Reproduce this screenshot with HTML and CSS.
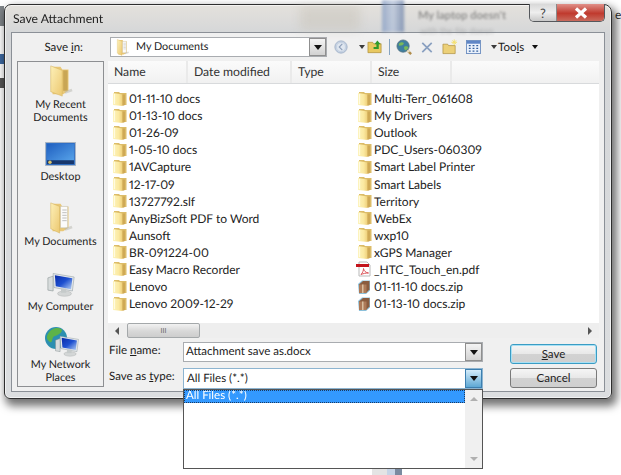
FILE: index.html
```html
<!DOCTYPE html>
<html lang="en">
<head>
<meta charset="utf-8">
<title>Save Attachment</title>
<link rel="stylesheet" href="styles.css">
</head>
<body>
<svg class="defs" width="0" height="0" aria-hidden="true">
  <defs>
    <linearGradient id="fold" x1="0" y1="0" x2="1" y2="0"><stop offset="0" stop-color="#fdf3bc"/><stop offset=".6" stop-color="#fbe9a0"/><stop offset="1" stop-color="#eecf7a"/></linearGradient>
    <linearGradient id="foldBig" x1="0" y1="0" x2="1" y2="1"><stop offset="0" stop-color="#fdf0b8"/><stop offset="1" stop-color="#ecc870"/></linearGradient>
    <linearGradient id="screen" x1="0" y1="0" x2="1" y2="1"><stop offset="0" stop-color="#0a2ba8"/><stop offset=".5" stop-color="#1e50d0"/><stop offset="1" stop-color="#b8d2f4"/></linearGradient>
    <linearGradient id="desk" x1="0" y1="0" x2="1" y2="1"><stop offset="0" stop-color="#1f5fc0"/><stop offset="1" stop-color="#58a4ea"/></linearGradient>
    <symbol id="folder" viewBox="0 0 14 14">
      <path d="M1 0h5l1 1h6.500v12H1z" fill="#dcbc68"/>
      <path d="M0 1l9.500 1.500V14L0 13z" fill="url(#fold)"/>
      <path d="M1.500 2v10" stroke="#fffbe0" stroke-width="1.200"/>
      <path d="M9.500 2.500h2.500V13L9.500 14z" fill="#cfa955"/>
    </symbol>
    <symbol id="pdf" viewBox="0 0 16 16">
      <path d="M3 1h8l3 3v11H3z" fill="#fff" stroke="#b9b9b9"/>
      <rect x="0" y="3" width="13" height="3" fill="#c4141c"/>
      <path d="M5 13.500c2-2 2.500-4.500 2.500-6 .5 2.500 2 4 5 4.500-3 0-5 .5-7.500 1.500z" fill="none" stroke="#d8444a" stroke-width=".9"/>
    </symbol>
    <symbol id="zip" viewBox="0 0 14 14">
      <path d="M0 4l4-3.500h8v10L8 14H1z" fill="#8cc0da"/>
      <path d="M1 4.500 5 1h6.500v8.500L8 13H1z" fill="#8a5c3e"/>
      <path d="M1 4.500h7.500V13H1z" fill="#ad7a58"/>
      <path d="M4 4.500h1.500V13H4z" fill="#d9bfa0"/>
    </symbol>
    <symbol id="bigfolder" viewBox="0 0 30 36">
      <path d="M6 2h9l2 3h7v24l-6 4H6z" fill="#e9c878"/>
      <path d="M18 6h5v23h-5z" fill="#c9a655"/>
      <path d="M4 1l13 5v29L4 30z" fill="url(#foldBig)" stroke="#d6b45c" stroke-width=".6"/>
      <path d="M20 31l8-3" stroke="#b8b8b0" stroke-width="3" opacity=".5"/>
    </symbol>
    <symbol id="docfolder" viewBox="0 0 30 36">
      <path d="M6 2h9l2 3h7v24l-6 4H6z" fill="#e9c878"/>
      <path d="M15 5h8v24h-8z" fill="#fbfbfb" stroke="#b8b8b0" stroke-width=".5"/>
      <path d="M17 9h5M17 12h5M17 15h5M17 18h5M17 21h5" stroke="#a8a8a8" stroke-width=".8"/>
      <path d="M4 1l10 4v30L4 30z" fill="url(#foldBig)" stroke="#d6b45c" stroke-width=".6"/>
      <path d="M20 31l8-3" stroke="#b8b8b0" stroke-width="3" opacity=".5"/>
    </symbol>
    <symbol id="monitor" viewBox="0 0 34 32">
      <path d="M2 9l6-2v17l-6-1z" fill="#d8dcdc" stroke="#7f8a8c" stroke-width=".6"/>
      <path d="M8 4l24 4-2 16L9 20z" fill="#e4e8ec" stroke="#8b979c" stroke-width=".6"/>
      <path d="M10 6l20 3.500-1.500 12.500L11 18.500z" fill="url(#screen)"/>
      <ellipse cx="21" cy="27" rx="8" ry="3" fill="#d3d6d6" stroke="#a9adad" stroke-width=".5"/>
      <path d="M17 21h6v5h-6z" fill="#c5caca"/>
    </symbol>
  </defs>
</svg>

<div class="backdrop">
  <span class="bg-title">My laptop doesn't</span>
  <span class="bg-sub">with the file doesn</span>
  <span class="bg-tail">e</span>
  <span class="bg-band"></span>
  <span class="bg-smudge"></span>
  <span class="bg-left"></span>
  <span class="bg-foot"></span>
</div>

<main class="dialog">
  <header class="titlebar">
    <span class="title">Save Attachment</span>
    <div class="caption">
      <span class="cap-help">?</span>
      <span class="cap-close">
        <svg width="18" height="14" viewBox="0 0 18 14"><path d="M4 2.500l10 9M14 2.500l-10 9" stroke="#fff" stroke-width="3.200"/></svg>
      </span>
    </div>
  </header>

  <section class="frame">
    <div class="toolbar">
      <label class="tool-label">Save <u>i</u>n:</label>
      <div class="combo location">
        <svg class="loc-icon" width="15" height="17"><use href="#docfolder"/></svg>
        <span class="combo-text">My Documents</span>
        <span class="drop"><i></i></span>
      </div>
      <div class="tools">
        <svg class="t-back" width="14" height="14" viewBox="0 0 16 16"><circle cx="8" cy="8" r="7" fill="#c6d2e2" stroke="#9fb0c8"/><circle cx="8" cy="8" r="4.500" fill="#e0e7f0"/><path d="M9.500 4.500 6 8l3.500 3.500" fill="none" stroke="#8ea0ba" stroke-width="1.300"/></svg>
        <i class="mini-arrow"></i>
        <svg class="t-up" width="16" height="16" viewBox="0 0 17 16"><path d="M1 3h5l1 1.500h8V14H1z" fill="#e8c860" stroke="#a98a34" stroke-width=".7"/><path d="M11 1l3.500 4H12.500v5H7V8h3V5H8z" fill="#2f9a2a"/></svg>
        <span class="t-sep"></span>
        <svg class="t-web" width="17" height="17" viewBox="0 0 18 18"><circle cx="7.500" cy="7.500" r="6.500" fill="#3f7e9e" stroke="#54707e" stroke-width=".8"/><path d="M3 5c2-2 4-2 5-1s-1 3-3 3-2 1-2-2zM9 8c2-1 4 0 4 1s-2 3-3 3-2-3-1-4z" fill="#7ab95a"/><path d="M12 12l4 4" stroke="#b08c4a" stroke-width="2.500"/><circle cx="13" cy="13" r="1.400" fill="#e4ddc4"/></svg>
        <svg class="t-del" width="12" height="13" viewBox="0 0 14 14"><path d="M1.500 1.500l11 11M12.500 1.500l-11 11" stroke="#8aa0c0" stroke-width="2"/></svg>
        <svg class="t-new" width="16" height="16" viewBox="0 0 17 16"><path d="M1 5h5l1 1.500h7V15H1z" fill="#ecd078" stroke="#a98a34" stroke-width=".7"/><path d="M13 0v6M10 3h6M11 1l4 4M15 1l-4 4" stroke="#f4e06a" stroke-width="1"/></svg>
        <svg class="t-view" width="15" height="14" viewBox="0 0 16 15"><rect x=".5" y=".5" width="15" height="14" fill="#eaf1fb" stroke="#6f8fc0"/><rect x="1" y="1" width="14" height="3" fill="#5f86c6"/><path d="M3 6h2M7 6h2M11 6h2M3 9h2M7 9h2M11 9h2M3 12h2M7 12h2M11 12h2" stroke="#35609f" stroke-width="1.400"/></svg>
        <div class="t-tools"><i class="mini-arrow"></i><span>Too<u>l</u>s</span><i class="mini-arrow dark"></i></div>
      </div>
    </div>

    <div class="middle">
      <nav class="places">
        <a class="place recent"><svg width="27" height="32"><use href="#bigfolder"/></svg><span>My Recent Documents</span></a>
        <a class="place desktop">
          <svg width="31" height="24" viewBox="0 0 32 25"><rect x=".5" y=".5" width="31" height="24" fill="#2f6fc6" stroke="#a9b4c2"/><rect x="2" y="2" width="28" height="18" fill="url(#desk)"/><rect x="2" y="19" width="28" height="4" fill="#17366c"/><circle cx="5" cy="21" r="1.800" fill="#d9c36a"/></svg>
          <span>Desktop</span>
        </a>
        <a class="place docs"><svg width="27" height="32"><use href="#docfolder"/></svg><span>My Documents</span></a>
        <a class="place computer"><svg width="30" height="28"><use href="#monitor"/></svg><span>My Computer</span></a>
        <a class="place network">
          <span class="net-icon">
            <svg width="34" height="32" viewBox="0 0 34 32"><circle cx="12" cy="13" r="11" fill="#2c8fb0"/><path d="M4 9c3-6 10-7 13-5s-2 6-6 7-2 8-5 6-4-5-2-8z" fill="#5db348"/></svg>
            <svg class="net-mon" width="26" height="25"><use href="#monitor"/></svg>
          </span>
          <span>My Network Places</span>
        </a>
      </nav>

      <div class="browser">
        <div class="list-head">
          <span class="col c-name">Name</span>
          <span class="col c-date">Date modified</span>
          <span class="col c-type">Type</span>
          <span class="col c-size">Size</span>
          <span class="col c-rest"></span>
        </div>
        <div class="files">
          <ul class="file-col">
            <li><svg><use href="#folder"/></svg>01-11-10 docs</li>
            <li><svg><use href="#folder"/></svg>01-13-10 docs</li>
            <li><svg><use href="#folder"/></svg>01-26-09</li>
            <li><svg><use href="#folder"/></svg>1-05-10 docs</li>
            <li><svg><use href="#folder"/></svg>1AVCapture</li>
            <li><svg><use href="#folder"/></svg>12-17-09</li>
            <li><svg><use href="#folder"/></svg>13727792.slf</li>
            <li><svg><use href="#folder"/></svg>AnyBizSoft PDF to Word</li>
            <li><svg><use href="#folder"/></svg>Aunsoft</li>
            <li><svg><use href="#folder"/></svg>BR-091224-00</li>
            <li><svg><use href="#folder"/></svg>Easy Macro Recorder</li>
            <li><svg><use href="#folder"/></svg>Lenovo</li>
            <li><svg><use href="#folder"/></svg>Lenovo 2009-12-29</li>
          </ul>
          <ul class="file-col">
            <li><svg><use href="#folder"/></svg>Multi-Terr_061608</li>
            <li><svg><use href="#folder"/></svg>My Drivers</li>
            <li><svg><use href="#folder"/></svg>Outlook</li>
            <li><svg><use href="#folder"/></svg>PDC_Users-060309</li>
            <li><svg><use href="#folder"/></svg>Smart Label Printer</li>
            <li><svg><use href="#folder"/></svg>Smart Labels</li>
            <li><svg><use href="#folder"/></svg>Territory</li>
            <li><svg><use href="#folder"/></svg>WebEx</li>
            <li><svg><use href="#folder"/></svg>wxp10</li>
            <li><svg><use href="#folder"/></svg>xGPS Manager</li>
            <li><svg class="wide"><use href="#pdf"/></svg>_HTC_Touch_en.pdf</li>
            <li><svg><use href="#zip"/></svg>01-11-10 docs.zip</li>
            <li><svg><use href="#zip"/></svg>01-13-10 docs.zip</li>
          </ul>
        </div>
        <div class="hscroll">
          <i class="arrow-l"></i>
          <span class="thumb">III</span>
          <i class="arrow-r"></i>
        </div>
        <div class="form">
          <div class="fields">
            <div class="field">
              <label>File <u>n</u>ame:</label>
              <div class="combo"><span class="combo-text">Attachment save as.docx</span><span class="drop"><i></i></span></div>
            </div>
            <div class="field">
              <label>Save as <u>t</u>ype:</label>
              <div class="combo active"><span class="combo-text type">All Files (*.*)</span><span class="drop"><i></i></span></div>
            </div>
          </div>
          <div class="buttons">
            <button class="btn default"><u>S</u>ave</button>
            <button class="btn">Cancel</button>
          </div>
        </div>
      </div>
    </div>
  </section>
</main>

<div class="dropdown">
  <div class="options"><div class="option">All Files (*.*)</div></div>
  <div class="vscroll"><i class="up"></i><i class="down"></i></div>
</div>
</body>
</html>
```
FILE: styles.css
```css
* { box-sizing: border-box; }
html, body { margin: 0; padding: 0; }
body {
  width: 621px; height: 475px; overflow: hidden; position: relative;
  background: #fff; color: #1c1c1c;
  font: 11.500px/15px Lato, "Open Sans", sans-serif;
  font-variant-numeric: proportional-nums;
  text-rendering: geometricPrecision;
}
.defs { position: absolute; }
u { text-decoration-thickness: 1px; text-underline-offset: 1px; }
i { display: block; }

/* what lies behind the glass dialog */
.backdrop { position: absolute; inset: 0; overflow: hidden; }
.backdrop span { position: absolute; }
.bg-title { left: 418px; top: 8px; font-weight: 700; font-size: 11px; color: #555; filter: blur(1.2px); z-index: 3; opacity: .55; }
.bg-sub { left: 420px; top: 23px; font-size: 9px; color: #888; filter: blur(1.4px); z-index: 3; opacity: .5; }
.bg-tail { left: 615px; top: 7px; font-size: 12px; color: #333; }
.bg-band { left: 382px; top: 0; width: 22px; height: 32px; background: linear-gradient(90deg, #6f8cbc, #aebfdc 50%, #526c9c); filter: blur(1.5px); z-index: 3; opacity: .6; }
.bg-smudge { left: 300px; top: 6px; width: 60px; height: 24px; background: #c9c4ba; filter: blur(5px); z-index: 3; opacity: .5; }
.bg-left { left: 0; top: 6px; width: 4px; height: 120px; background: linear-gradient(#7f8488 0 20px, #fff 20px 48px, #3d68a0 48px 58px, #fff 58px 72px, #555 72px 82px, #fff 82px); }
.bg-foot { left: 372px; top: 468px; width: 30px; height: 7px; background: linear-gradient(90deg, #e4e4e4 0 50%, #c6d4e6 50% 75%, #7a8aa0 75%); }

.dialog, .dropdown { filter: blur(.3px); }
.dialog {
  position: absolute; left: 4px; top: 4px; width: 608px; height: 395px;
  display: flex; flex-direction: column;
  padding: 0 6px 6px 6px;
  background: linear-gradient(180deg, #e4e1dc 0, #d4d6d8 30px, #dcdee0 100%);
  border: 1px solid #2e2e2e; border-radius: 7px 8px 6px 6px;
  box-shadow: 3px 5px 9px 2px rgba(0,0,0,.55), inset 0 0 0 1px rgba(255,255,255,.6);
}
.titlebar { height: 27px; flex: none; display: flex; justify-content: space-between; position: relative; z-index: 4; }
.title { padding: 6px 0 0 2px; font-size: 12.200px; color: #222; }
.caption { display: flex; height: 18px; margin-top: -1px; border: 1px solid #55585c; border-top: 0; border-radius: 0 0 5px 5px; overflow: hidden; }
.cap-help { width: 27px; text-align: center; font-size: 13px; line-height: 18px; color: #444; background: linear-gradient(#d8d8d8, #eeeeee 50%, #c8c8c8); border-right: 1px solid #8a8a8a; }
.cap-close { width: 47px; display: flex; align-items: center; justify-content: center; background: linear-gradient(#e09088, #c03a2e 55%, #c96a5c); }

.frame {
  flex: 1; min-height: 0; display: flex; flex-direction: column;
  padding: 0 5px 4px 5px;
  background: #f0f0f0; border: 1px solid #8b9097;
}
.toolbar { height: 28px; flex: none; display: flex; align-items: center; }
.tool-label { width: 93px; padding-right: 27px; text-align: right; }
.combo {
  display: flex; align-items: stretch; height: 20px; width: 300px;
  background: #fff; border: 1px solid #a9acb0;
}
.combo-text { flex: 1; padding-left: 2px; line-height: 18px; white-space: nowrap; overflow: hidden; }
.combo-text.type { padding-left: 3px; line-height: 20px; }
.drop { width: 17px; flex: none; display: flex; align-items: center; justify-content: center; background: linear-gradient(#f4f4f4, #d2d2d2); border: 1px solid #8f8f8f; }
.drop i { border: 4px solid transparent; border-top: 5px solid #111; border-bottom: 0; }
.active { height: 21px; border-color: #8db4d0; }
.active .drop { background: linear-gradient(#d4ecfa, #5ea8d4); border-color: #3c7fb0; }
.location { width: 217px; }
.location .combo-text { padding-left: 6px; font-size: 10.800px; }
.loc-icon { margin: 1px 0 0 4px; }
.tools { display: flex; align-items: center; margin-left: 7px; }
.t-back { margin-right: 11px; }
.mini-arrow { width: 0; height: 0; border: 3px solid transparent; border-top: 4px solid #3a3a3a; border-bottom: 0; }
.t-up { margin-left: 2px; }
.t-sep { width: 1px; height: 16px; background: #86a4c0; margin: 0 6px; }
.t-web { margin-right: 8px; }
.t-del { margin-right: 9px; }
.t-new { margin-right: 8px; }
.t-view { margin-right: 10px; }
.t-tools { display: flex; align-items: center; gap: 1px; }
.t-tools .dark { margin-left: 7px; border-top-color: #111; }

.middle { flex: 1; min-height: 0; display: flex; gap: 4px; }
.places {
  width: 87px; flex: none; display: flex; flex-direction: column;
  background: #f0f0f0; border: 1px solid #8d8f92;
}
.place { display: flex; flex-direction: column; align-items: center; text-align: center; line-height: 13px; font-size: 10.800px; color: #222; }
.place span { display: block; }
.place svg { display: block; }
.recent { padding-top: 3px; }
.recent svg { margin-bottom: 1px; }
.desktop { margin-top: 18px; }
.desktop svg { margin-bottom: 4px; }
.docs { margin-top: 19px; }
.docs svg { margin-bottom: 1px; }
.computer { margin-top: 22px; }
.computer svg { margin-bottom: 2px; }
.network { margin-top: 12px; }
.net-icon { position: relative; width: 34px; height: 32px; margin-bottom: 1px; }
.net-mon { position: absolute; left: 10px; top: 8px; }

.browser { flex: 1; min-width: 0; display: flex; flex-direction: column; }
.list-head {
  height: 23px; flex: none; display: flex;
  background: linear-gradient(#fbfbfb, #f1f1f1); border-bottom: 1px solid #d8dadc;
}
.col { padding: 3px 0 0 6px; border-right: 2px solid #eaeaea; color: #333; font-size: 12.200px; }
.c-name { width: 80px; }
.c-date { width: 104px; }
.c-type { width: 80px; }
.c-size { width: 80px; }
.c-rest { flex: 1; border-right: 0; }
.files { height: 239px; flex: none; display: flex; background: #fff; padding-top: 6px; }
.file-col { margin: 0; padding: 0; list-style: none; width: 245px; padding-left: 5px; }
.file-col li { display: flex; align-items: center; gap: 2px; height: 17.100px; white-space: nowrap; color: #222; font-size: 12px; }
.file-col svg { width: 14px; height: 14px; flex: none; }
.file-col svg.wide { width: 16px; height: 16px; margin-left: -2px; }
.hscroll { height: 15px; flex: none; display: flex; align-items: center; background: #eeeeee; padding: 0 7px; }
.arrow-l { border: 4px solid transparent; border-right: 4px solid #555; border-left: 0; }
.arrow-r { margin-left: auto; border: 4px solid transparent; border-left: 4px solid #555; border-right: 0; }
.thumb {
  width: 73px; height: 15px; margin-left: 8px; text-align: center; font-size: 7px; line-height: 14px; color: #666;
  background: linear-gradient(#f2f2f2, #d8d8d8 55%, #cdcdcd); border: 1px solid #a4a8aa; border-radius: 2px;
}
.form { flex: 1; display: flex; padding: 4px 0 0 1px; }
.fields { width: 375px; display: flex; flex-direction: column; gap: 6px; }
.field { display: flex; align-items: flex-start; }
.field label { width: 74px; flex: none; line-height: 17px; }
.buttons { margin-left: 26px; margin-top: 2px; display: flex; flex-direction: column; gap: 4px; }
.btn {
  width: 87px; height: 20px; padding: 0; font: 11.500px/16px Lato, "Open Sans", sans-serif; color: #222;
  background: linear-gradient(#f5f5f5, #e8e8e8 48%, #d2d2d2 52%, #cfcfcf);
  border: 1px solid #7a7a7a; border-radius: 3px;
}
.default { border-color: #3a9cc4; box-shadow: inset 0 0 0 1px #a8e0f4; }

.dropdown {
  position: absolute; left: 183px; top: 389px; width: 300px; height: 80px;
  display: flex; background: #fff; border: 1px solid #555;
}
.options { flex: 1; }
.option { height: 13px; background: #3399ff; color: #fff; line-height: 12px; padding-left: 2px; outline: 1px dotted #1a3a60; outline-offset: -1px; }
.vscroll { width: 17px; flex: none; display: flex; flex-direction: column; justify-content: space-between; align-items: center; padding: 7px 0; background: #f0f0f0; }
.up { border: 4px solid transparent; border-bottom: 4px solid #b0b0b0; border-top: 0; }
.down { border: 4px solid transparent; border-top: 4px solid #b0b0b0; border-bottom: 0; }
```
